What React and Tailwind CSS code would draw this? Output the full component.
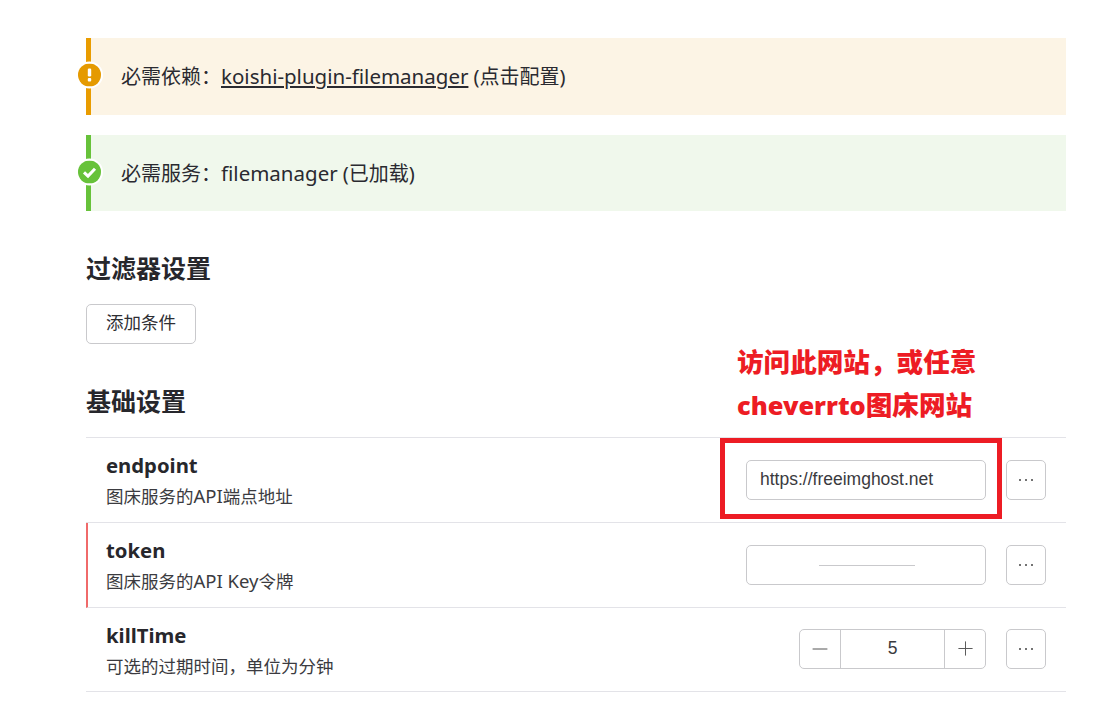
import { Minus, Plus } from "lucide-react";

const cjk = "font-['Noto_Sans','Noto_Sans_CJK_SC',sans-serif]";

function AlertIcon({ type }) {
  const offset = type === "warning" ? "mt-[-2px]" : "mt-[-1px]";
  return (
    <div className={`absolute left-[-15px] top-1/2 flex h-[27px] w-[27px] -translate-y-1/2 items-center justify-center rounded-full bg-white ${offset}`}>
      <svg width="23" height="23" viewBox="0 0 23 23">
        {type === "warning" ? (
          <>
            <circle cx="11.5" cy="11.5" r="11.5" fill="#e59a00" />
            <rect x="9.8" y="5" width="3.4" height="8" rx="1.2" fill="#fff" />
            <rect x="9.8" y="14.6" width="3.4" height="3.4" rx="1" fill="#fff" />
          </>
        ) : (
          <>
            <circle cx="11.5" cy="11.5" r="11.5" fill="#67c23a" />
            <path d="M6 11.8 L10 15.6 L17 8.2" fill="none" stroke="#fff" strokeWidth="3" />
          </>
        )}
      </svg>
    </div>
  );
}

function Alert({ type, height, children }) {
  const tone =
    type === "warning"
      ? "border-[#e99c00] bg-[#fcf4e5]"
      : "border-[#67c23a] bg-[#f0f8ec]";
  return (
    <div className={`relative flex items-center border-l-[5px] pl-[30px] text-[20px] text-[#2a2a30] ${height} ${tone}`}>
      <AlertIcon type={type} />
      <div>{children}</div>
    </div>
  );
}

function MoreButton() {
  return (
    <button className="ml-5 flex h-10 w-10 items-center justify-center rounded-[5px] border border-[#c9c9cc] bg-white">
      <svg width="14" height="4" viewBox="0 0 14 4" fill="#444">
        <circle cx="1" cy="2" r="1" />
        <circle cx="7" cy="2" r="1" />
        <circle cx="13" cy="2" r="1" />
      </svg>
    </button>
  );
}

function Row({ name, desc, invalid, height = "h-[85px]", textShift = "mb-px", descGap = "mt-1", controlShift = "", children }) {
  return (
    <div className={`relative flex items-center justify-between border-b border-[#e3e3e8] pl-5 pr-5 ${height} ${invalid ? "border-l-2 border-l-[#f06a6a] pl-[18px]" : ""}`}>
      <div className={textShift}>
        <div className="text-[20.3px] leading-[28px] font-bold text-[#27272c]">{name}</div>
        <div className={`text-[17.5px] leading-[25px] text-[#3b3b40] ${descGap}`}>{desc}</div>
      </div>
      <div className={`flex items-center ${controlShift}`}>{children}</div>
    </div>
  );
}

export default function App() {
  return (
    <div className={`relative min-h-[724px] bg-white pl-[86px] pt-[38px] ${cjk}`}>
      <div className="relative w-[980px]">
        <Alert type="warning" height="h-[77px]">
          必需依赖：<a className="text-[20.5px] underline underline-offset-2">koishi-plugin-filemanager</a> (点击配置)
        </Alert>
        <div className="mt-5">
          <Alert type="success" height="h-[76px]">
            必需服务：<span className="text-[20.5px]">filemanager</span> (已加载)
          </Alert>
        </div>

        <h2 className="mt-[37px] text-[25px] leading-[40px] font-bold text-[#27272c]">过滤器设置</h2>
        <button className="mt-4 block h-10 w-[110px] rounded-[5px] border border-[#c9c9cc] bg-white pb-[3px] text-[17.5px] text-[#2e2e33]">
          添加条件
        </button>

        <h2 className="mt-[37px] text-[25px] leading-[40px] font-bold text-[#27272c]">基础设置</h2>

        <div className="mt-4 border-t border-[#e3e3e8]">
          <Row name="endpoint" desc={<>图床服务的<span className="text-[18.5px]">API</span>端点地址</>}>
            <div className="flex h-10 w-[240px] items-center rounded-[5px] border border-[#c9c9cc] pb-px pl-[13px] font-['Liberation_Sans',sans-serif] text-[17.5px] text-[#3a3a3e]">
              https://freeimghost.net
            </div>
            <MoreButton />
          </Row>
          <Row name="token" desc={<>图床服务的<span className="text-[18.5px]">API Key</span>令牌</>} invalid>
            <div className="flex h-10 w-[240px] items-center justify-center rounded-[5px] border border-[#c9c9cc]">
              <div className="ml-px h-px w-24 bg-[#c9c9cc]" />
            </div>
            <MoreButton />
          </Row>
          <Row name="killTime" desc="可选的过期时间，单位为分钟" height="h-[84px]" textShift="mt-px" descGap="mt-[5px]" controlShift="mb-[2px]">
            <div className="flex h-10 w-[187px] items-center rounded-[5px] border border-[#c9c9cc] font-['Liberation_Sans',sans-serif] text-[17.5px] text-[#3a3a3e]">
              <div className="flex h-full w-[41px] items-center justify-center border-r border-[#c9c9cc]">
                <Minus size={24} strokeWidth={1} color="#555" />
              </div>
              <div className="flex-1 text-center">5</div>
              <div className="flex h-full w-[41px] items-center justify-center border-l border-[#c9c9cc]">
                <Plus size={23} strokeWidth={1} color="#555" />
              </div>
            </div>
            <MoreButton />
          </Row>
        </div>
      </div>

      {/* red annotation drawn on top of the screenshot */}
      <div className="absolute left-[737px] top-[341px] text-[26.6px] leading-[43px] font-black text-[#ed1c24]">
        <div>访问此网站，或任意</div>
        <div><span className="text-[25.4px]">cheverrto</span>图床网站</div>
      </div>
      <div className="absolute left-[720px] top-[438px] h-[81px] w-[282px] border-[5px] border-[#ed1c24]" />
    </div>
  );
}
